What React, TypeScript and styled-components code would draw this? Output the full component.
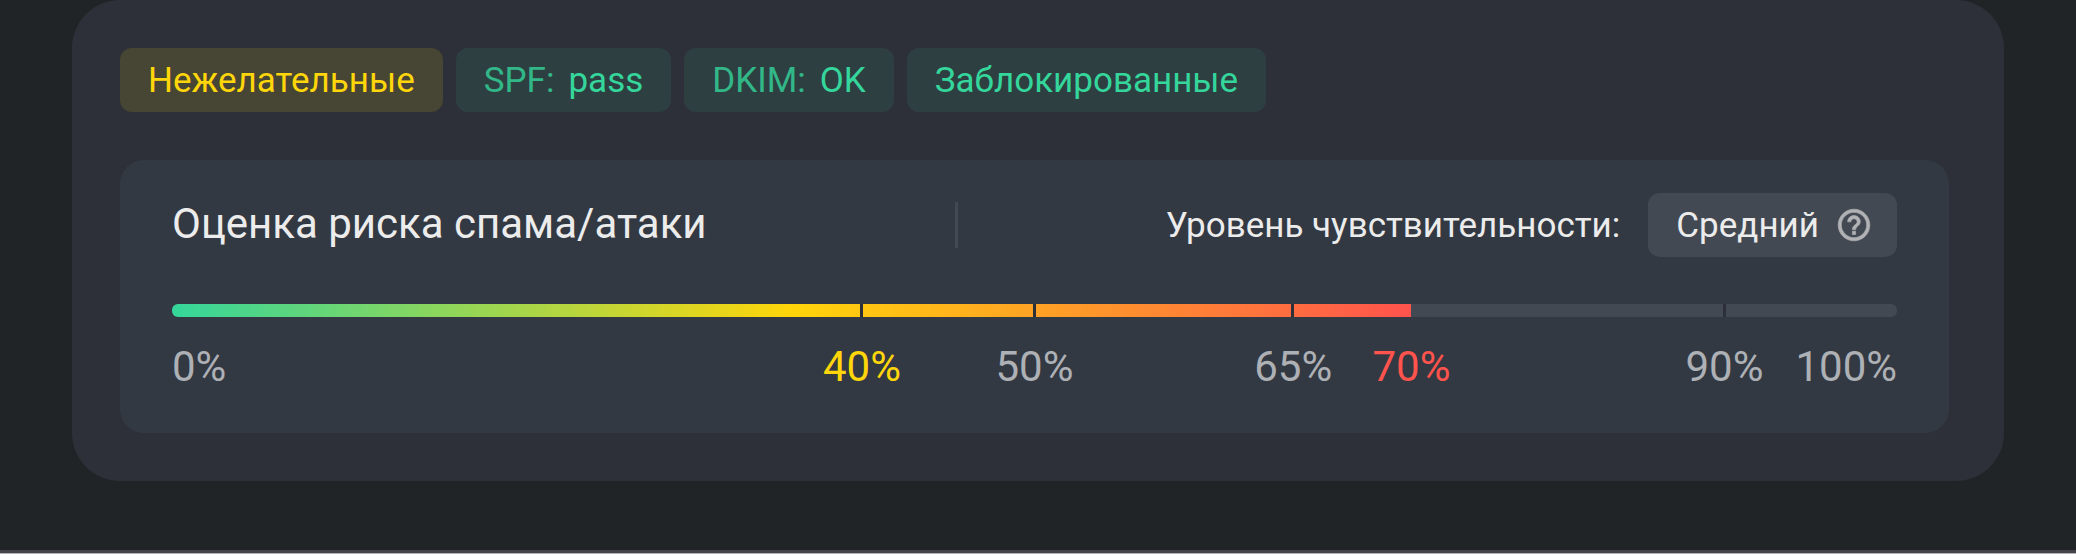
import React from "react";
import styled, { createGlobalStyle } from "styled-components";

const GlobalStyle = createGlobalStyle`
  *, *::before, *::after { box-sizing: border-box; }
  body {
    margin: 0;
    background: #212427;
    color: #ececec;
    font-family: Roboto, "Noto Sans", sans-serif;
  }
`;

type Tone = "warning" | "success";
type LabelTone = "muted" | "warning" | "danger";

const tagColors: Record<Tone, { text: string; background: string }> = {
  warning: { text: "#ffd60a", background: "#474533" },
  success: { text: "#34d69b", background: "#2e3f42" },
};

const labelColors: Record<LabelTone, string> = {
  muted: "#adb0b5",
  warning: "#ffd60a",
  danger: "#ff534d",
};

const Page = styled.div`
  display: flex;
  flex-direction: column;
  min-height: 100vh;
`;

const Card = styled.main`
  margin: 0 72px;
  padding: 48px 55px 48px 48px;
  border-radius: 48px;
  background: #2e3039;
`;

const TagList = styled.ul`
  display: flex;
  flex-wrap: wrap;
  gap: 13px;
  margin: 0 0 48px;
  padding: 0;
  list-style: none;
`;

const Tag = styled.li<{ $tone: Tone }>`
  display: flex;
  align-items: center;
  gap: 14px;
  height: 64px;
  padding: 2px 28px 0;
  border-radius: 12px;
  font-size: 35px;
  line-height: 44px;
  white-space: nowrap;
  color: ${({ $tone }) => tagColors[$tone].text};
  background: ${({ $tone }) => tagColors[$tone].background};
`;

const TagName = styled.span`
  opacity: 0.8;
`;

const Panel = styled.section`
  padding: 33px 52px 40px;
  border-radius: 24px;
  background: #333942;
`;

const PanelHeader = styled.header`
  display: flex;
  align-items: center;
  height: 64px;
`;

const Title = styled.h2`
  flex: 1;
  margin: 0;
  padding-bottom: 2px;
  font-size: 42px;
  font-weight: 400;
  line-height: 60px;
  white-space: nowrap;
`;

const Divider = styled.span`
  width: 3px;
  height: 46px;
  background: #434952;
`;

const Sensitivity = styled.div`
  display: flex;
  flex: 1.2;
  align-items: center;
  justify-content: flex-end;
  gap: 28px;
  font-size: 35px;
  white-space: nowrap;
`;

const LevelButton = styled.button`
  display: flex;
  align-items: center;
  gap: 16px;
  height: 64px;
  padding: 0 24px 0 28px;
  border: 0;
  border-radius: 12px;
  background: #434952;
  color: inherit;
  font: inherit;
  cursor: pointer;
`;

const HelpIcon = styled.svg`
  width: 38px;
  height: 38px;
  fill: #b0b2b5;
  stroke: #b0b2b5;
  stroke-width: 0.4;
`;

const Track = styled.div`
  position: relative;
  height: 13px;
  margin-top: 47px;
  border-radius: 6px;
  overflow: hidden;
  background: #434952;
`;

const Fill = styled.div`
  height: 100%;
  background: linear-gradient(90deg, #34d69b, #ffd60a 50%, #ff534d);
`;

const Tick = styled.span`
  position: absolute;
  top: 0;
  width: 3px;
  height: 100%;
  margin-left: -2px;
  background: #2e3039;
`;

const Scale = styled.div`
  display: grid;
  margin-top: 24px;
  font-size: 42px;
  line-height: 52px;
`;

const Interval = styled.div`
  display: flex;
  justify-content: flex-end;
  min-width: 0;
`;

const StartLabel = styled.span`
  margin-right: auto;
  color: ${labelColors.muted};
`;

const EndLabel = styled.span`
  color: ${labelColors.muted};
`;

const StopLabel = styled.span<{ $tone: LabelTone }>`
  display: flex;
  justify-content: center;
  width: 0;
  white-space: nowrap;
  color: ${({ $tone }) => labelColors[$tone]};
`;

const BottomEdge = styled.footer`
  height: 4px;
  margin-top: auto;
  border-bottom: 1px solid #b4b3b8;
  background: #45434c;
`;

const score = 71.85;

const stops: { at: number; text: string; tone: LabelTone; tick: boolean }[] = [
  { at: 40, text: "40%", tone: "warning", tick: true },
  { at: 50, text: "50%", tone: "muted", tick: true },
  { at: 65, text: "65%", tone: "muted", tick: true },
  { at: score, text: "70%", tone: "danger", tick: false },
  { at: 90, text: "90%", tone: "muted", tick: true },
];

const columns = [...stops.map((s) => s.at), 100]
  .map((at, i) => `${at - (i === 0 ? 0 : stops[i - 1].at)}fr`)
  .join(" ");

export default function App() {
  return (
    <>
      <GlobalStyle />
      <Page>
        <Card>
          <TagList>
            <Tag $tone="warning">Нежелательные</Tag>
            <Tag $tone="success">
              <TagName>SPF:</TagName>
              <span>pass</span>
            </Tag>
            <Tag $tone="success">
              <TagName>DKIM:</TagName>
              <span>OK</span>
            </Tag>
            <Tag $tone="success">Заблокированные</Tag>
          </TagList>
          <Panel aria-labelledby="risk-title">
            <PanelHeader>
              <Title id="risk-title">Оценка риска спама/атаки</Title>
              <Divider />
              <Sensitivity>
                <span id="level-label">Уровень чувствительности:</span>
                <LevelButton type="button" aria-describedby="level-label">
                  Средний
                  <HelpIcon viewBox="0 0 24 24" aria-hidden="true">
                    <path d="M11 18h2v-2h-2v2zm1-16C6.48 2 2 6.48 2 12s4.48 10 10 10 10-4.48 10-10S17.52 2 12 2zm0 18c-4.41 0-8-3.59-8-8s3.59-8 8-8 8 3.59 8 8-3.59 8-8 8zm0-14c-2.21 0-4 1.79-4 4h2c0-1.1.9-2 2-2s2 .9 2 2c0 2-3 1.75-3 5h2c0-2.25 3-2.5 3-5 0-2.21-1.79-4-4-4z" />
                  </HelpIcon>
                </LevelButton>
              </Sensitivity>
            </PanelHeader>
            <Track
              role="meter"
              aria-labelledby="risk-title"
              aria-valuemin={0}
              aria-valuemax={100}
              aria-valuenow={70}
            >
              <Fill style={{ width: `${score}%` }} />
              {stops
                .filter((stop) => stop.tick)
                .map((stop) => (
                  <Tick key={stop.at} style={{ left: `${stop.at}%` }} />
                ))}
            </Track>
            <Scale style={{ gridTemplateColumns: columns }}>
              {stops.map((stop, i) => (
                <Interval key={stop.at}>
                  {i === 0 && <StartLabel>0%</StartLabel>}
                  <StopLabel $tone={stop.tone}>{stop.text}</StopLabel>
                </Interval>
              ))}
              <Interval>
                <EndLabel>100%</EndLabel>
              </Interval>
            </Scale>
          </Panel>
        </Card>
        <BottomEdge />
      </Page>
    </>
  );
}
